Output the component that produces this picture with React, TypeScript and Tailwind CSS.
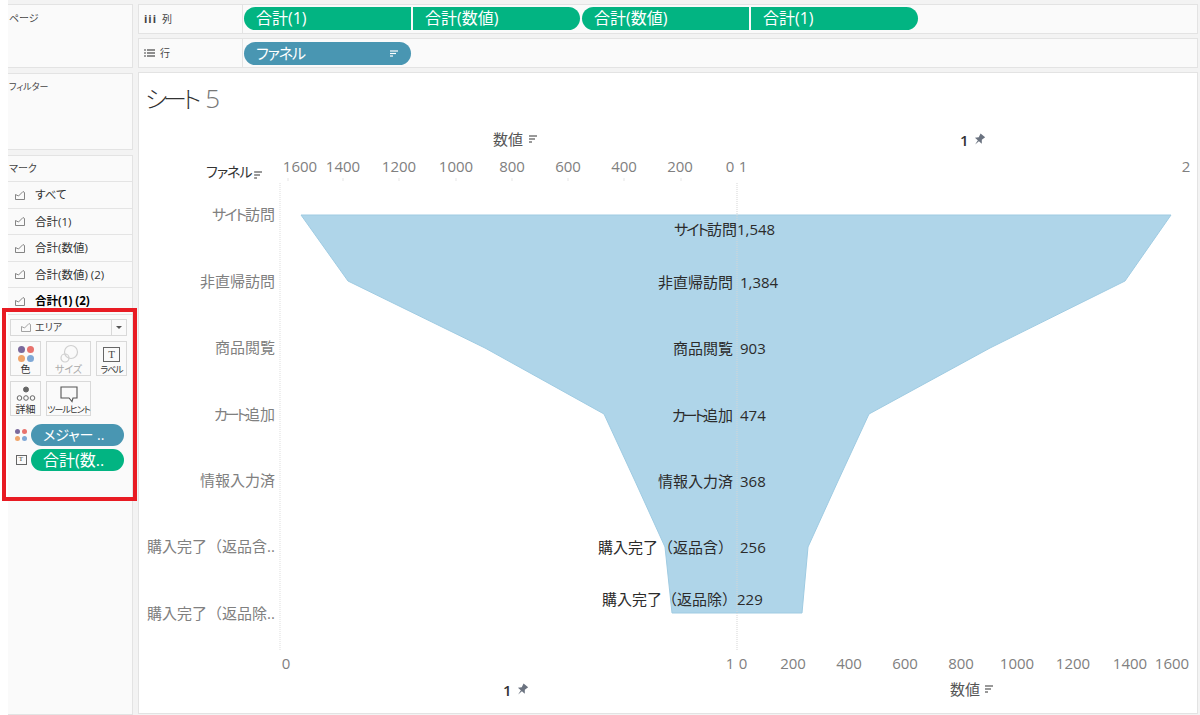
const funnelPoints =
  "301,215 348,281 485,348 604,414 635,481 665,547 672,613 802,613 808,547 838,481 869,414 990,348 1125,281 1171,215";

const stages = [
  { kana: "サイト", rest: "訪問", axisRest: "訪問", kanaClass: "tracking-[-2px]", axisY: 220, y: 235, value: "1,548", vx: 737 },
  { kana: "", rest: "非直帰訪問", axisRest: "非直帰訪問", kanaClass: "", axisY: 287, y: 288, value: "1,384", vx: 740 },
  { kana: "", rest: "商品閲覧", axisRest: "商品閲覧", kanaClass: "", axisY: 353, y: 354, value: "903", vx: 740 },
  { kana: "カート", rest: "追加", axisRest: "追加", kanaClass: "tracking-[-3px]", axisY: 420, y: 421, value: "474", vx: 740 },
  { kana: "", rest: "情報入力済", axisRest: "情報入力済", kanaClass: "", axisY: 486, y: 487, value: "368", vx: 740 },
  { kana: "", rest: "購入完了（返品含）", axisRest: "購入完了（返品含..", kanaClass: "", axisY: 552, y: 553, value: "256", vx: 740 },
  { kana: "", rest: "購入完了（返品除）", axisRest: "購入完了（返品除..", kanaClass: "", axisY: 619, y: 605, value: "229", vx: 737 },
];

const topTicks = [
  { label: "1600", x: 300, tick: 288 },
  { label: "1400", x: 343, tick: 343 },
  { label: "1200", x: 399, tick: 399 },
  { label: "1000", x: 456, tick: 456 },
  { label: "800", x: 512, tick: 512 },
  { label: "600", x: 568, tick: 568 },
  { label: "400", x: 624, tick: 624 },
  { label: "200", x: 680, tick: 681 },
];

const bottomTicks = [
  { label: "200", x: 793 },
  { label: "400", x: 849 },
  { label: "600", x: 905 },
  { label: "800", x: 961 },
  { label: "1000", x: 1017 },
  { label: "1200", x: 1073 },
  { label: "1400", x: 1130 },
  { label: "1600", x: 1172 },
];

function AreaIcon({ className = "" }: { className?: string }) {
  return (
    <svg viewBox="0 0 12 12" className={`w-3 h-3 ${className}`} fill="none" stroke="currentColor" strokeWidth="0.9">
      <path d="M1.5 10.5V5.5L4.5 7L9 2.5L10.5 3.5V10.5Z" />
    </svg>
  );
}

function SortIcon({ x, y, color = "#555" }: { x: number; y: number; color?: string }) {
  return (
    <g stroke={color} strokeWidth="1.2">
      <line x1={x} x2={x + 8} y1={y} y2={y} />
      <line x1={x} x2={x + 6} y1={y + 3} y2={y + 3} />
      <line x1={x} x2={x + 3} y1={y + 6} y2={y + 6} />
    </g>
  );
}

function PinIcon({ x, y }: { x: number; y: number }) {
  return (
    <path
      transform={`translate(${x},${y}) rotate(40)`}
      d="M-3 -6H3L2 -2L4.5 1H-4.5L-2 -2ZM-0.7 1H0.7L0 6Z"
      fill="#6b7380"
    />
  );
}

function ColorDots({ size = "w-[7px] h-[7px]", gap = "gap-[2px]" }: { size?: string; gap?: string }) {
  return (
    <div className={`grid grid-cols-2 ${gap}`}>
      <span className={`${size} rounded-full bg-[#7b6a9c]`} />
      <span className={`${size} rounded-full bg-[#e8726d]`} />
      <span className={`${size} rounded-full bg-[#f0a56b]`} />
      <span className={`${size} rounded-full bg-[#7fa8d6]`} />
    </div>
  );
}

function MarkButton({ label, width, muted, tight, children }: { label: string; width: string; muted?: boolean; tight?: boolean; children: React.ReactNode }) {
  return (
    <div className={`${width} h-[35px] border border-[#d9d9d9] bg-[#fafafa] flex flex-col items-center justify-between pt-[3px]`}>
      <div className="h-[19px] flex items-center justify-center">{children}</div>
      <span className={`leading-[11px] whitespace-nowrap ${tight ? "text-[9px] tracking-[-1px]" : "text-[10px]"} ${muted ? "text-[#aaa]" : "text-[#333]"}`}>{label}</span>
    </div>
  );
}

function ColumnPill({ label, side }: { label: string; side: "l" | "r" }) {
  return (
    <div
      className={`w-[167px] h-[23px] bg-[#02b482] text-white text-[16px] leading-[23px] pl-[12px] ${
        side === "l" ? "rounded-l-[12px]" : "rounded-r-[12px]"
      }`}
    >
      {label}
    </div>
  );
}

function MarkRow({ label, bold }: { label: string; bold?: boolean }) {
  return (
    <div className="h-[26.5px] border-b border-[#e4e4e4] flex items-center gap-[9px] pl-[6px] text-[#333]">
      <AreaIcon className="text-[#777]" />
      <span className={`text-[11.5px] ${bold ? "font-bold text-black" : ""}`}>{label}</span>
    </div>
  );
}

export default function App() {
  return (
    <div className="w-[1200px] h-[715px] bg-white pl-[8px] overflow-hidden relative font-['Open_Sans','Noto_Sans_CJK_JP',sans-serif] [font-feature-settings:'palt']">
      <div className="h-full w-[1192px] bg-[#f3f3f3] flex gap-[5px] pt-[4px]">
        {/* left rail */}
        <div className="w-[125px] flex flex-col gap-[5px]">
          <div className="h-[64px] bg-[#fafafa] border border-l-0 border-[#e3e3e3] px-[1px] pt-[6px] text-[10px] text-[#444]">ページ</div>
          <div className="h-[77px] bg-[#fafafa] border border-l-0 border-[#e3e3e3] px-[1px] pt-[6px] text-[9px] text-[#444]">フィルター</div>
          <div className="flex-1 bg-[#fafafa] border border-l-0 border-[#e3e3e3]">
            <div className="h-[26px] border-b border-[#e4e4e4] text-[10px] text-[#444] px-[1px] pt-[5px]">マーク</div>
            <MarkRow label="すべて" />
            <MarkRow label="合計(1)" />
            <MarkRow label="合計(数値)" />
            <MarkRow label="合計(数値) (2)" />
            <MarkRow label="合計(1) (2)" bold />

            <div className="px-[1px] pt-[4px]">
              <div className="w-[117px] h-[17px] ml-[1px] border border-[#d9d9d9] bg-[#fafafa] flex items-center text-[10px] text-[#444]">
                <div className="flex-1 flex items-center gap-[3px] pl-[9px]">
                  <AreaIcon className="text-[#999]" />
                  エリア
                </div>
                <div className="w-[15px] h-full border-l border-[#d9d9d9] flex items-center justify-center">
                  <span className="w-0 h-0 border-x-[3px] border-x-transparent border-t-[3px] border-t-[#555]" />
                </div>
              </div>

              <div className="flex gap-[5px] ml-[1px] mt-[5px]">
                <MarkButton label="色" width="w-[31px]">
                  <ColorDots />
                </MarkButton>
                <MarkButton label="サイズ" width="w-[45px]" muted>
                  <svg viewBox="0 0 20 20" className="w-[20px] h-[20px]" fill="none" stroke="#cfcfcf" strokeWidth="1.2">
                    <circle cx="12" cy="8" r="6.5" />
                    <circle cx="6" cy="14" r="4" />
                  </svg>
                </MarkButton>
                <MarkButton label="ラベル" width="w-[31px]" tight>
                  <div className="w-[17px] h-[15px] border border-[#666] flex items-center justify-center text-[11px] leading-none font-['Liberation_Serif',serif] text-[#444]">T</div>
                </MarkButton>
              </div>

              <div className="flex gap-[5px] ml-[1px] mt-[5px]">
                <MarkButton label="詳細" width="w-[31px]">
                  <svg viewBox="0 0 20 16" className="w-[20px] h-[16px]" fill="none" stroke="#666">
                    <circle cx="10" cy="3.5" r="2.5" fill="#666" />
                    <circle cx="3.5" cy="12" r="2.3" />
                    <circle cx="10" cy="12" r="2.3" />
                    <circle cx="16.5" cy="12" r="2.3" />
                  </svg>
                </MarkButton>
                <MarkButton label="ツールヒント" width="w-[45px]" tight>
                  <svg viewBox="0 0 20 18" className="w-[20px] h-[18px]" fill="none" stroke="#555" strokeWidth="1.1">
                    <path d="M2 2H18V13H14L13 16.5L10 13H2Z" />
                  </svg>
                </MarkButton>
              </div>

              <div className="flex items-center ml-[6px] mt-[8px]">
                <div className="w-[12px] flex justify-center">
                  <ColorDots size="w-[5px] h-[5px]" />
                </div>
                <div className="ml-[4px] w-[93px] h-[22px] rounded-full bg-[#4996b2] text-white text-[14px] leading-[22px] pl-[12px] whitespace-nowrap">メジャー ..</div>
              </div>
              <div className="flex items-center ml-[6px] mt-[3px]">
                <div className="w-[12px] flex justify-center">
                  <div className="w-[11px] h-[10px] border border-[#666] flex items-center justify-center text-[7px] leading-none font-['Liberation_Serif',serif] text-[#444]">T</div>
                </div>
                <div className="ml-[4px] w-[93px] h-[22px] rounded-full bg-[#02b482] text-white text-[16px] leading-[22px] pl-[12px] whitespace-nowrap">合計(数..</div>
              </div>
            </div>
          </div>
        </div>

        {/* shelves and sheet */}
        <div className="w-[1060px] flex flex-col gap-[4px]">
          <div className="h-[30px] bg-[#fafafa] border border-[#e3e3e3] flex items-start">
            <div className="w-[104px] h-full border-r border-[#e3e3e3] flex items-center gap-[5px] pl-[5px] text-[10px] text-[#444]">
              <span className="font-bold text-[11px] tracking-[1px]">iii</span>列
            </div>
            <div className="flex gap-[2px] pl-[1px] pt-[2px]">
              <ColumnPill label="合計(1)" side="l" />
              <ColumnPill label="合計(数値)" side="r" />
              <ColumnPill label="合計(数値)" side="l" />
              <ColumnPill label="合計(1)" side="r" />
            </div>
          </div>

          <div className="h-[30px] bg-[#fafafa] border border-[#e3e3e3] flex items-center">
            <div className="w-[104px] h-full border-r border-[#e3e3e3] flex items-center gap-[5px] pl-[5px] text-[10px] text-[#444]">
              <svg viewBox="0 0 11 8" className="w-[11px] h-[8px]" stroke="#444" strokeWidth="1.2">
                <line x1="0" x2="2" y1="1" y2="1" />
                <line x1="3" x2="11" y1="1" y2="1" />
                <line x1="0" x2="2" y1="4" y2="4" />
                <line x1="3" x2="11" y1="4" y2="4" />
                <line x1="0" x2="2" y1="7" y2="7" />
                <line x1="3" x2="11" y1="7" y2="7" />
              </svg>
              行
            </div>
            <div className="ml-[1px] w-[167px] h-[23px] rounded-full bg-[#4996b2] text-white text-[15px] leading-[23px] pl-[12px] flex items-center justify-between pr-[13px]">
              <span className="tracking-[-1px]">ファネル</span>
              <svg viewBox="0 0 8 7" className="w-[8px] h-[7px]" stroke="white" strokeWidth="1.2">
                <line x1="0" x2="8" y1="1" y2="1" />
                <line x1="0" x2="6" y1="3.5" y2="3.5" />
                <line x1="0" x2="3" y1="6" y2="6" />
              </svg>
            </div>
          </div>

          <div className="flex-1 bg-white border border-[#e3e3e3] flex flex-col mb-[1px]">
            <div className="h-[42px] pl-[6px] pt-[7px] text-[26px] leading-[36px] font-light text-[#333]">
              <span className="text-[24px] tracking-[-4px]">シート</span>
              <span className="ml-[8px] text-[#777]">5</span>
            </div>
            {/* funnel chart: viewBox uses page coordinates */}
            <svg viewBox="139 115 1058 598" className="w-[1058px] h-[598px] block text-[15px]">
              <polygon points={funnelPoints} fill="#afd5e9" stroke="#9fcbe2" strokeWidth="1" />

              <line x1="280" x2="280" y1="183" y2="650" stroke="#ddd" strokeDasharray="1 1" />
              <line x1="737" x2="737" y1="183" y2="650" stroke="#d5d5d5" strokeDasharray="1 1" />

              <text x="493" y="145" fill="#555">数値</text>
              <SortIcon x={529} y={136} />
              <text x="960" y="146" className="font-semibold" fill="#333">1</text>
              <PinIcon x={979} y={140} />

              <text x="206" y="177" className="text-[14px] tracking-[-1px]" fill="#333">ファネル</text>
              <SortIcon x={254} y={172} />

              {topTicks.map((t) => (
                <g key={t.label}>
                  <text x={t.x} y="172" textAnchor="middle" fill="#808080">{t.label}</text>
                  <line x1={t.tick} x2={t.tick} y1="178" y2="181" stroke="#e5e5e5" />
                </g>
              ))}
              <text x="730" y="172" textAnchor="middle" fill="#808080">0</text>
              <text x="743" y="172" textAnchor="middle" fill="#808080">1</text>
              <text x="1186" y="172" textAnchor="middle" fill="#808080">2</text>

              {stages.map((s) => {
                const fullWidth = s.rest.includes("（") ? "[font-feature-settings:normal]" : "";
                return (
                  <g key={s.rest}>
                    <text x="275" y={s.axisY} textAnchor="end" className={fullWidth} fill="#808080">
                      <tspan className={s.kanaClass}>{s.kana}</tspan>
                      {s.axisRest}
                    </text>
                    <text x={s.vx - (s.vx === 737 ? 0 : 7)} y={s.y} textAnchor="end" className={fullWidth} fill="#2b2b2b">
                      <tspan className={s.kanaClass}>{s.kana}</tspan>
                      {s.rest}
                    </text>
                    <text x={s.vx} y={s.y} fill="#2b2b2b">{s.value}</text>
                  </g>
                );
              })}

              <text x="286" y="669" textAnchor="middle" fill="#808080">0</text>
              <text x="730" y="669" textAnchor="middle" fill="#808080">1</text>
              <text x="743" y="669" textAnchor="middle" fill="#808080">0</text>
              {bottomTicks.map((t) => (
                <text key={t.label} x={t.x} y="669" textAnchor="middle" fill="#808080">{t.label}</text>
              ))}

              <text x="503" y="696" className="font-semibold" fill="#333">1</text>
              <PinIcon x={522} y={690} />
              <text x="950" y="695" fill="#555">数値</text>
              <SortIcon x={985} y={686} />
            </svg>
          </div>
        </div>
      </div>

      {/* red highlight drawn over the marks card */}
      <div className="absolute left-[2px] top-[308px] w-[135px] h-[193px] border-[4px] border-[#e81b23] pointer-events-none" />
    </div>
  );
}
